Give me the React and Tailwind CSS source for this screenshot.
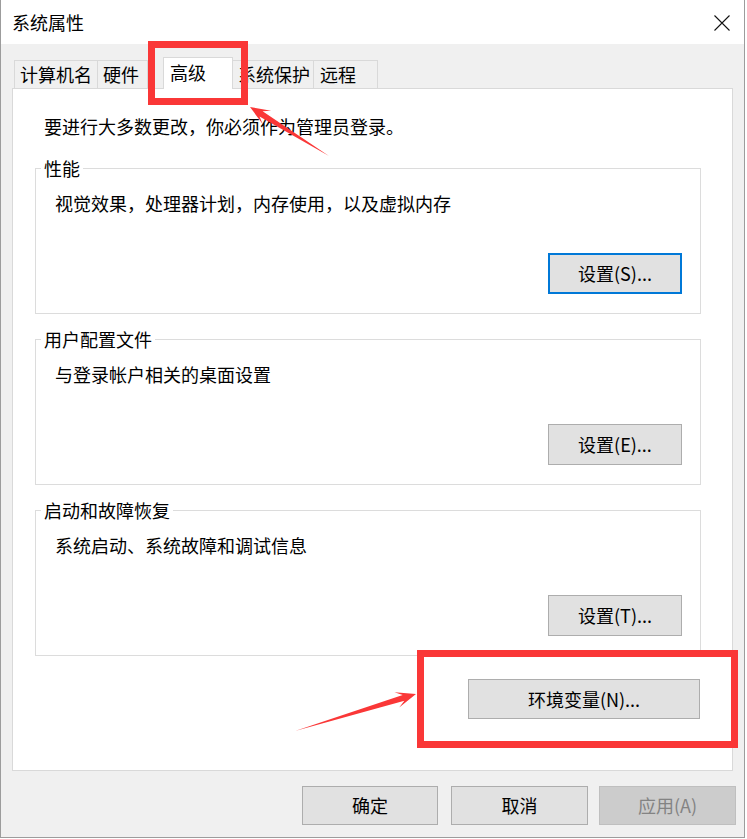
import React from 'react';

const RED = '#fa3737';

function arrowPoints(tx, ty, px, py) {
  const dx = px - tx;
  const dy = py - ty;
  const len = Math.hypot(dx, dy);
  const ux = dx / len;
  const uy = dy / len;
  const nx = -uy;
  const ny = ux;
  const at = (back, side) => `${(px - ux * back + nx * side).toFixed(1)},${(py - uy * back + ny * side).toFixed(1)}`;
  return [
    `${tx},${ty}`,
    at(13, 3),
    at(20, 8),
    `${px},${py}`,
    at(20, -8),
    at(13, -3),
  ].join(' ');
}

function Tab({ label, className = '' }) {
  return (
    <div className={`h-[28px] flex items-center pl-[5px] pb-[1px] border border-b-0 border-[#d9d9d9] bg-[#f0f0f0] ${className}`}>
      {label}
    </div>
  );
}

function Btn({ children, focused, className = '' }) {
  return (
    <div
      className={`flex items-center justify-center bg-[#e1e1e1] ${
        focused ? 'border-2 border-[#0078d7]' : 'border border-[#adadad]'
      } ${className}`}
    >
      {children}
    </div>
  );
}

function Group({ title, desc, button, focused }) {
  return (
    <fieldset className="ml-[22px] w-[666px] border border-[#dcdcdc]">
      <legend className="ml-[5px] px-[3px] leading-[24px]">{title}</legend>
      <div className="pl-[19px] pr-[18px] pt-[11px] pb-[19px] flex flex-col">
        <div className="leading-[24px]">{desc}</div>
        <Btn focused={focused} className="self-end mt-[38px] w-[134px] h-[41px]">
          {button}
        </Btn>
      </div>
    </fieldset>
  );
}

export default function App() {
  return (
    <div className="relative w-[747px] h-[839px] bg-white overflow-hidden text-[18px] text-black font-['Noto_Sans_CJK_SC',sans-serif]">
      <div className="w-[745px] h-[838px] flex flex-col border-x border-b border-[#9c9c9c]">
        {/* title bar */}
        <div className="h-[44px] shrink-0 bg-white flex items-center justify-between pl-[11px] pr-[14px]">
          <span className="leading-[24px] -mt-[1px]">系统属性</span>
          <svg width="16" height="16" viewBox="0 0 16 16" className="mt-[1px]">
            <path d="M0.5 0.5 L15.5 15.5 M15.5 0.5 L0.5 15.5" stroke="#111" strokeWidth="1.1" />
          </svg>
        </div>

        <div className="flex-1 bg-[#f0f0f0] pt-[13px] flex flex-col">
          {/* tabs */}
          <div className="h-[31px] flex items-end pl-[13px] leading-[24px]">
            <Tab label="计算机名" className="w-[84px]" />
            <Tab label="硬件" className="w-[51px] -ml-px" />
            <div className="w-[15px]" />
            <div className="relative z-10 -mb-px w-[70px] h-[32px] bg-white border border-b-0 border-[#d9d9d9] flex items-center pl-[6px] pb-[4px]">
              高级
            </div>
            <Tab label="系统保护" className="w-[82px] -ml-px pl-[4px]" />
            <Tab label="远程" className="w-[65px] -ml-px pl-[6px]" />
          </div>

          {/* panel */}
          <div className="mx-[11px] h-[683px] bg-white border border-[#d9d9d9] flex flex-col">
            <div className="pl-[31px] pt-[25px] leading-[24px]">要进行大多数更改，你必须作为管理员登录。</div>
            <div className="mt-[18px] flex flex-col gap-[13px]">
              <Group title="性能" desc="视觉效果，处理器计划，内存使用，以及虚拟内存" button="设置(S)..." focused />
              <Group title="用户配置文件" desc="与登录帐户相关的桌面设置" button="设置(E)..." />
              <Group title="启动和故障恢复" desc="系统启动、系统故障和调试信息" button="设置(T)..." />
            </div>
            <Btn className="self-end mt-[23px] mr-[32px] w-[232px] h-[40px]">环境变量(N)...</Btn>
          </div>

          {/* footer buttons */}
          <div className="mt-[15px] flex justify-end pr-[8px]">
            <Btn className="w-[136px] h-[39px]">确定</Btn>
            <Btn className="ml-[13px] w-[137px] h-[39px]">取消</Btn>
            <div className="ml-[11px] w-[137px] h-[39px] flex items-center justify-center bg-[#cccccc] border border-[#bfbfbf] text-[#838383]">
              应用(A)
            </div>
          </div>
        </div>
      </div>

      {/* annotations */}
      <div className="absolute left-[148px] top-[41px] w-[100px] h-[64px] border-[7px]" style={{ borderColor: RED }} />
      <div className="absolute left-[417px] top-[650px] w-[321px] h-[98px] border-[7px]" style={{ borderColor: RED }} />
      <svg className="absolute inset-0 pointer-events-none" width="747" height="839">
        <polygon points={arrowPoints(329, 156, 250, 107)} fill={RED} />
        <polygon points={arrowPoints(295, 731, 416, 694)} fill={RED} />
      </svg>
    </div>
  );
}
